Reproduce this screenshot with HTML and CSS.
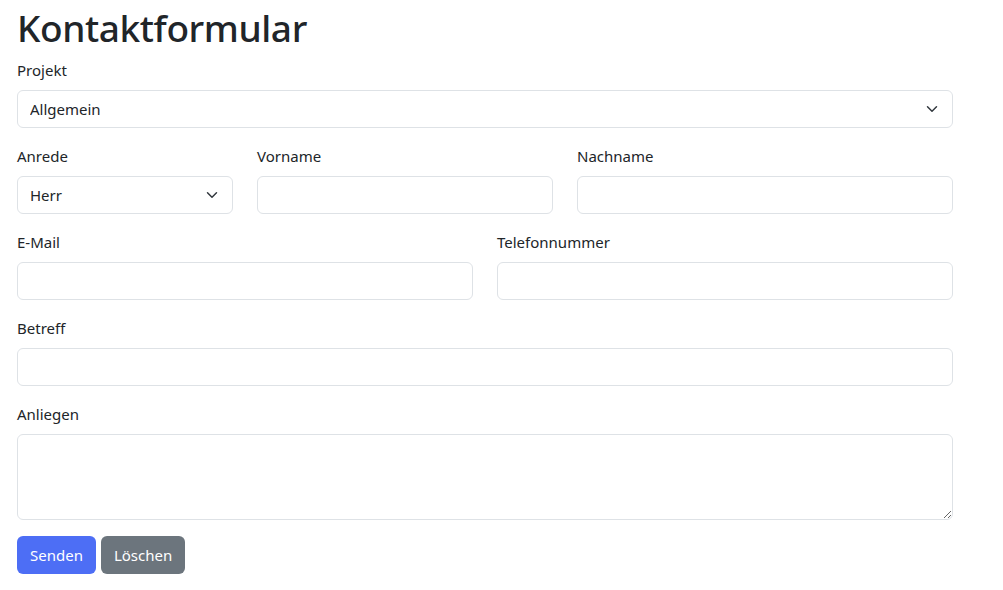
FILE: index.html
```html
<!DOCTYPE html>
<html lang="de">
<head>
    <meta charset="UTF-8">
    <title>Kontaktformular</title>
    <link rel="stylesheet" href="styles.css">
</head>
<body>

<div class="page">
    <h1>Kontaktformular</h1>

    <form id="contactForm">
        <div class="field">
            <label for="projekt">Projekt</label>
            <select id="projekt" class="control select">
                <option>Allgemein</option>
            </select>
        </div>

        <div class="row">
            <div class="field col-3">
                <label for="anrede">Anrede</label>
                <select id="anrede" class="control select">
                    <option>Herr</option>
                    <option>Frau</option>
                </select>
            </div>
            <div class="field col-4">
                <label for="vorname">Vorname</label>
                <input type="text" id="vorname" class="control">
            </div>
            <div class="field col-5">
                <label for="nachname">Nachname</label>
                <input type="text" id="nachname" class="control">
            </div>
        </div>

        <div class="row">
            <div class="field col-6">
                <label for="email">E-Mail</label>
                <input type="email" id="email" class="control">
            </div>
            <div class="field col-6">
                <label for="telefon">Telefonnummer</label>
                <input type="tel" id="telefon" class="control">
            </div>
        </div>

        <div class="field">
            <label for="betreff">Betreff</label>
            <input type="text" id="betreff" class="control">
        </div>

        <div class="field">
            <label for="anliegen">Anliegen</label>
            <textarea id="anliegen" class="control" rows="3"></textarea>
        </div>

        <div class="buttons">
            <button type="submit" class="btn btn-primary">Senden</button>
            <button type="reset" class="btn btn-secondary">Löschen</button>
        </div>
    </form>
</div>

</body>
</html>
```

FILE: styles.css
```css
body {
    margin: 0;
    font-family: "Noto Sans", "Open Sans", sans-serif;
    font-size: 15px;
    line-height: 24px;
    color: #212529;
    background: #fff;
}
.page {
    width: 936px;
    padding: 0 17px;
}
h1 {
    font-size: 37px;
    line-height: 48px;
    font-weight: 500;
    letter-spacing: -0.4px;
    margin: 4px 0 6px;
}
.field {
    margin-bottom: 16px;
}
label {
    display: block;
    margin-bottom: 8px;
}
.control {
    display: block;
    box-sizing: border-box;
    width: 100%;
    height: 38px;
    padding: 6px 12px;
    font: inherit;
    color: #212529;
    background: #fff;
    border: 1px solid #dee2e6;
    border-radius: 6px;
}
textarea.control {
    height: 86px;
    resize: vertical;
}
.select {
    appearance: none;
    -webkit-appearance: none;
    padding-right: 36px;
    background-image: url("data:image/svg+xml,%3csvg xmlns='http://www.w3.org/2000/svg' viewBox='0 0 16 16'%3e%3cpath fill='none' stroke='%23343a40' stroke-linecap='round' stroke-linejoin='round' stroke-width='2' d='m2 5 6 6 6-6'/%3e%3c/svg%3e");
    background-repeat: no-repeat;
    background-position: right 12px center;
    background-size: 16px 12px;
}
.row {
    display: flex;
    gap: 24px;
}
.col-3 { flex: 0 0 216px; }
.col-4 { flex: 0 0 296px; }
.col-5 { flex: 1; }
.col-6 { flex: 1; }
.buttons {
    display: flex;
    gap: 5px;
}
.btn {
    font: inherit;
    color: #fff;
    padding: 6px 12px;
    border: 1px solid transparent;
    border-radius: 6px;
    cursor: pointer;
}
.btn-primary {
    background: #4d6ef5;
}
.btn-secondary {
    background: #6c757d;
}
```
